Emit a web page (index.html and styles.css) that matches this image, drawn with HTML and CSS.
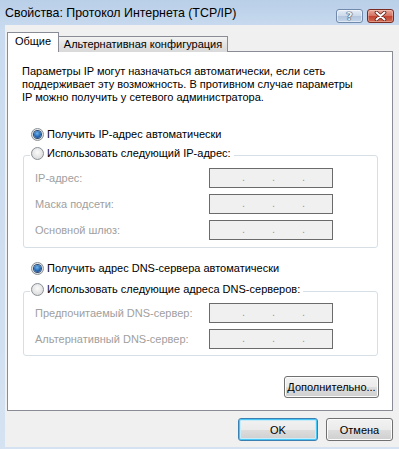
FILE: index.html
```html
<!DOCTYPE html>
<html lang="ru">

<head>
    <meta charset="UTF-8">
    <title>Свойства: Протокол Интернета (TCP/IP)</title>
    <link rel="stylesheet" href="styles.css">
</head>

<body>
    <div class="window">
        <div class="titlebar">
            <span class="title">Свойства: Протокол Интернета (TCP/IP)</span>
            <div class="caption-buttons">
                <div class="cap-btn help"><span class="help-mark">?</span></div>
                <div class="cap-btn close">
                    <svg width="13" height="10" viewBox="0 0 13 10">
                        <path d="M2.5 1.5 L10.5 8.5 M10.5 1.5 L2.5 8.5" stroke="#5a1f18" stroke-width="3.6" stroke-linecap="round" fill="none"/>
                        <path d="M2.5 1.5 L10.5 8.5 M10.5 1.5 L2.5 8.5" stroke="#ffffff" stroke-width="2" stroke-linecap="round" fill="none"/>
                    </svg>
                </div>
            </div>
        </div>

        <div class="client">
            <div class="tabs">
                <div class="tab active">Общие</div>
                <div class="tab">Альтернативная конфигурация</div>
            </div>

            <div class="panel">
                <p class="desc">Параметры IP могут назначаться автоматически, если сеть<br>поддерживает эту возможность. В противном случае параметры<br>IP можно получить у сетевого администратора.</p>

                <div class="option first"><span class="radio on"></span>Получить IP-адрес автоматически</div>

                <div class="group">
                    <div class="option legend"><span class="radio"></span>Использовать следующий IP-адрес:</div>
                    <div class="field">
                        <span class="field-label">IP-адрес:</span>
                        <div class="ipbox"><span>.</span><span>.</span><span>.</span></div>
                    </div>
                    <div class="field">
                        <span class="field-label">Маска подсети:</span>
                        <div class="ipbox"><span>.</span><span>.</span><span>.</span></div>
                    </div>
                    <div class="field">
                        <span class="field-label">Основной шлюз:</span>
                        <div class="ipbox"><span>.</span><span>.</span><span>.</span></div>
                    </div>
                </div>

                <div class="option dns-auto"><span class="radio on"></span>Получить адрес DNS-сервера автоматически</div>

                <div class="group dns">
                    <div class="option legend"><span class="radio"></span>Использовать следующие адреса DNS-серверов:</div>
                    <div class="field">
                        <span class="field-label">Предпочитаемый DNS-сервер:</span>
                        <div class="ipbox"><span>.</span><span>.</span><span>.</span></div>
                    </div>
                    <div class="field">
                        <span class="field-label">Альтернативный DNS-сервер:</span>
                        <div class="ipbox"><span>.</span><span>.</span><span>.</span></div>
                    </div>
                </div>

                <div class="panel-actions">
                    <button class="btn advanced">Дополнительно...</button>
                </div>
            </div>

            <div class="footer">
                <button class="btn default ok">OK</button>
                <button class="btn cancel">Отмена</button>
            </div>
        </div>
    </div>
</body>

</html>
```

FILE: styles.css
```css
* {
    box-sizing: border-box;
}

body {
    margin: 0;
    font-family: 'Liberation Sans', Arial, sans-serif;
    font-size: 11px;
    color: #000;
    background: #fff;
}

.window {
    width: 399px;
    height: 449px;
    display: flex;
    flex-direction: column;
    background: linear-gradient(#b9cfe8, #c9dbef 30px, #d4e2f1);
}

/* заголовок окна */
.titlebar {
    height: 25px;
    flex: none;
    display: flex;
    align-items: flex-start;
    padding: 0 5px;
}

.title {
    font-size: 12.4px;
    line-height: 14px;
    margin-top: 6px;
}

.caption-buttons {
    margin-left: auto;
    margin-top: 9px;
    display: flex;
    gap: 4px;
}

.cap-btn {
    width: 27px;
    height: 14px;
    border-radius: 3px;
    display: flex;
    align-items: center;
    justify-content: center;
}

.help {
    border: 1px solid #7189aa;
    background: linear-gradient(#e4ecf6, #cbd9ea 50%, #b3c6de 51%, #c4d5ea);
    box-shadow: inset 0 0 0 1px rgba(255, 255, 255, 0.5);
}

.help-mark {
    font-family: 'DejaVu Sans', sans-serif;
    font-weight: bold;
    font-size: 11px;
    line-height: 11px;
    color: #eef3f9;
    text-shadow: 0 0 1px #2c3e57, 0 0 1px #2c3e57, 0 0 1px #2c3e57;
}

.close {
    border: 1px solid #7a2c22;
    background: linear-gradient(#e8a898, #d4705f 50%, #c2412f 51%, #d06a52);
    box-shadow: inset 0 0 0 1px rgba(255, 220, 210, 0.4);
}

/* клиентская область */
.client {
    flex: 1;
    margin: 0 0 2px 5px;
    padding: 7px 6px 0 2px;
    background: #f0f0f0;
    display: flex;
    flex-direction: column;
}

.tabs {
    display: flex;
    align-items: flex-start;
    height: 20px;
    margin-bottom: -1px;
}

.tab {
    position: relative;
    height: 16px;
    margin-top: 4px;
    margin-left: -1px;
    width: 170px;
    border: 1px solid #898c95;
    border-bottom: none;
    background: linear-gradient(#f3f3f3, #e3e3e3 50%, #d9d9d9);
    text-align: center;
    line-height: 13px;
    padding-top: 1px;
}

.tab.active {
    z-index: 1;
    height: 20px;
    margin-top: 0;
    margin-left: 0;
    width: 52px;
    background: #fff;
    padding-top: 2px;
}

.panel {
    height: 360px;
    border: 1px solid #898c95;
    background: #fff;
    padding: 0 0 0 15px;
}

.desc {
    margin: 0;
    padding: 13px 0 0 0;
    line-height: 13px;
    margin-left: -1px;
}

.option {
    display: flex;
    align-items: center;
    height: 13px;
    line-height: 13px;
    white-space: nowrap;
}

.option.first {
    margin: 24px 0 0 8px;
}

.option.dns-auto {
    margin: 14px 0 0 8px;
}

.radio {
    width: 13px;
    height: 13px;
    flex: none;
    margin-right: 3px;
    border-radius: 50%;
    border: 1px solid #8a9096;
    background: radial-gradient(circle at 50% 40%, #fbfbfb, #e3e3e3 60%, #cfd2d5);
    display: flex;
    align-items: center;
    justify-content: center;
}

.radio.on::after {
    content: "";
    width: 7px;
    height: 7px;
    border-radius: 50%;
    background: radial-gradient(circle at 45% 35%, #6fb6ec, #2466b4 55%, #123f7c);
    box-shadow: 0 0 0 1px #2a4a70;
}

.group {
    width: 355px;
    margin-top: 14px;
    border: 1px solid #d5dfe5;
    border-radius: 3px;
    padding-bottom: 7px;
}

.group.dns {
    margin-top: 16px;
    padding-bottom: 6px;
}

.option.legend {
    width: fit-content;
    margin: -9px 0 0 6px;
    padding: 0 3px 0 1px;
    background: #fff;
}

.field {
    display: flex;
    align-items: center;
    height: 20px;
    margin-top: 6px;
}

.option.legend + .field {
    margin-top: 8px;
}

.group.dns .option.legend + .field {
    margin-top: 7px;
}

.field-label {
    width: 185px;
    padding-left: 11px;
    color: #a0a0a0;
}

.ipbox {
    width: 124px;
    height: 20px;
    border: 1px solid #6b6b6b;
    background: #f0f0f0;
    display: flex;
    padding-left: 32px;
    line-height: 16px;
    color: #9a9a9a;
}

.ipbox span {
    width: 30px;
}

.panel-actions {
    display: flex;
    justify-content: flex-end;
    margin-top: 20px;
    padding-right: 13px;
}

.btn {
    font-family: 'Liberation Sans', Arial, sans-serif;
    font-size: 11px;
    font-weight: normal;
    color: #000;
    height: 22px;
    padding: 0;
    border: 1px solid #707070;
    border-radius: 3px;
    background: linear-gradient(#f2f2f2, #ebebeb 50%, #dddddd 51%, #cfcfcf);
    box-shadow: inset 0 0 0 1px #fcfcfc;
}

.btn.advanced {
    width: 95px;
}

.footer {
    display: flex;
    justify-content: flex-end;
    gap: 8px;
    margin-top: 7px;
}

.footer .btn {
    height: 23px;
}

.btn.ok {
    width: 80px;
}

.btn.cancel {
    width: 67px;
}

.btn.default {
    border-color: #3c7fb1;
    box-shadow: inset 0 0 0 1px #48c7f4, inset 0 0 0 2px #c9ecfb;
}
```
